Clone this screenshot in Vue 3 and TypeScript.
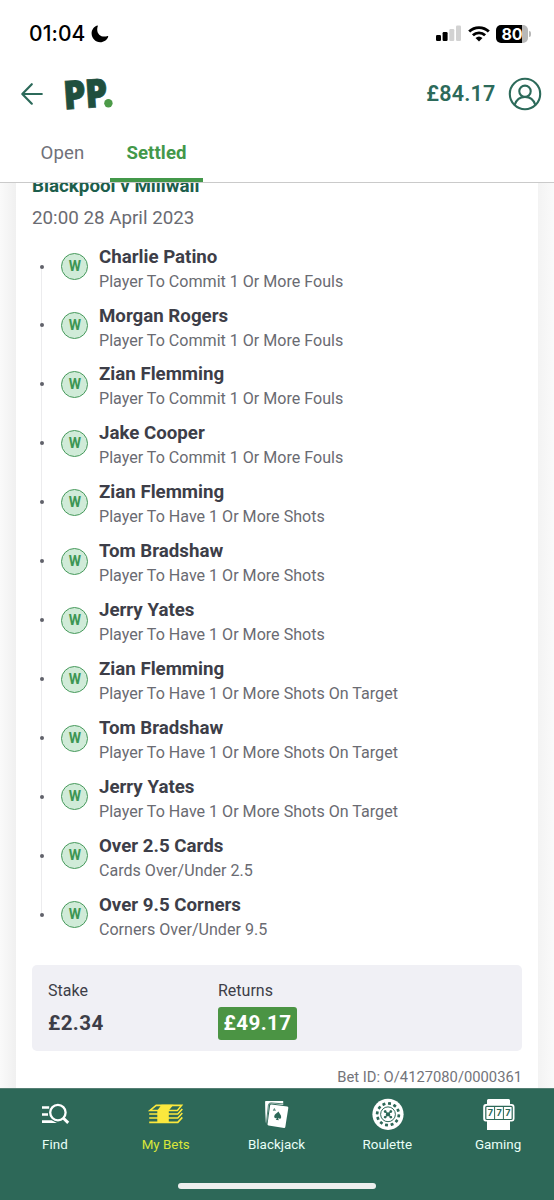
<script setup lang="ts">
interface Leg {
  name: string
  market: string
}

const fouls = 'Player To Commit 1 Or More Fouls'
const shots = 'Player To Have 1 Or More Shots'
const onTarget = 'Player To Have 1 Or More Shots On Target'

const legs: Leg[] = [
  { name: 'Charlie Patino', market: fouls },
  { name: 'Morgan Rogers', market: fouls },
  { name: 'Zian Flemming', market: fouls },
  { name: 'Jake Cooper', market: fouls },
  { name: 'Zian Flemming', market: shots },
  { name: 'Tom Bradshaw', market: shots },
  { name: 'Jerry Yates', market: shots },
  { name: 'Zian Flemming', market: onTarget },
  { name: 'Tom Bradshaw', market: onTarget },
  { name: 'Jerry Yates', market: onTarget },
  { name: 'Over 2.5 Cards', market: 'Cards Over/Under 2.5' },
  { name: 'Over 9.5 Corners', market: 'Corners Over/Under 9.5' },
]

const pockets = Array.from({ length: 12 }, (_, i) => i * 30 + 8)
</script>

<template>
  <div class="screen">
    <div class="status">
      <span class="clock">01:04</span>
      <svg class="moon" width="18" height="18" viewBox="0 0 18 18">
        <path d="M6.2 .6C2.9 1.8 .6 4.9 .6 8.6C.6 13.4 4.4 17.2 9.2 17.2C12.9 17.2 16 14.9 17.2 11.7C17.4 11.1 17 10.8 16.5 11C15.6 11.4 14.6 11.6 13.5 11.6C9.2 11.6 6.2 8.6 6.2 4.4C6.2 3.3 6.4 2.3 6.8 1.3C7 .8 6.7 .4 6.2 .6Z" fill="#000" />
      </svg>
      <svg class="signal" width="26" height="17" viewBox="0 0 26 17">
        <rect x="0" y="10" width="5" height="6" rx="1.2" />
        <rect x="6.6" y="7" width="5" height="9" rx="1.2" />
        <rect x="13.3" y="4" width="5" height="12" rx="1.2" fill="#d2d2d2" />
        <rect x="20" y="0.5" width="5" height="15.5" rx="1.2" fill="#d2d2d2" />
      </svg>
      <svg class="wifi" width="22" height="16" viewBox="0 0 22 16">
        <g fill="none" stroke="#000" stroke-width="2.9">
          <path d="M1.2 5.5A14.2 14.2 0 0 1 20.8 5.5" />
          <path d="M4.9 9.3A9 9 0 0 1 17.1 9.3" />
        </g>
        <path d="M7.5 12A5.2 5.2 0 0 1 14.5 12L11 15.6Z" />
      </svg>
      <div class="battery">
        <span class="level">80</span>
      </div>
      <span class="cap"></span>
    </div>

    <header class="bar">
      <svg class="back" width="22" height="22" viewBox="0 0 22 22">
        <path d="M10.8 1.2L1.3 11L10.8 20.7M1.6 11H20.8" fill="none" stroke="#2c6a5a" stroke-width="2.2" stroke-linecap="round" stroke-linejoin="round" />
      </svg>
      <svg class="logo" width="52" height="38" viewBox="0 0 52 38">
        <g class="logo-letters" transform="rotate(-4 22 18)">
          <text x="-1" y="34" textLength="22.5" lengthAdjust="spacingAndGlyphs">P</text>
          <text x="21" y="34" textLength="22.5" lengthAdjust="spacingAndGlyphs">P</text>
        </g>
        <circle cx="44.4" cy="29.3" r="4.2" fill="#4c9a48" />
      </svg>
      <span class="balance">£84.17</span>
      <svg class="avatar" width="34" height="34" viewBox="0 0 34 34" fill="none" stroke="#2c6a5a" stroke-width="2.1">
        <circle cx="17" cy="17" r="15.2" />
        <circle cx="17" cy="14.3" r="5.7" />
        <path d="M6.6 28C8.3 22.9 12.1 19.9 17 19.9S25.7 22.9 27.4 28" />
      </svg>
    </header>

    <nav class="tabs">
      <span class="tab">Open</span>
      <span class="tab active">Settled</span>
    </nav>

    <main class="content">
      <section class="card">
        <h2 class="match">Blackpool v Millwall</h2>
        <p class="date">20:00 28 April 2023</p>
        <ul class="legs">
          <li v-for="(leg, i) in legs" :key="i" class="leg">
            <span class="rail"><i class="dot"></i></span>
            <span class="result">W</span>
            <div class="detail">
              <b class="name">{{ leg.name }}</b>
              <span class="market">{{ leg.market }}</span>
            </div>
          </li>
        </ul>
        <div class="summary">
          <div class="stake">
            <span class="label">Stake</span>
            <b class="amount">£2.34</b>
          </div>
          <div class="returns">
            <span class="label">Returns</span>
            <b class="amount paid">£49.17</b>
          </div>
        </div>
        <p class="bet-id">Bet ID: O/4127080/0000361</p>
      </section>
    </main>

    <footer class="bottom">
      <div class="items">
        <div class="item">
          <svg width="36" height="32" viewBox="0 0 36 32">
            <g fill="none" stroke="#fff">
              <path d="M5 7.6H12.2M5 14.4H11" stroke-width="2.5" />
              <path d="M5 20.2H14.6L20 23H5Z" fill="#fff" stroke="none" />
              <circle cx="20.9" cy="12.6" r="7.7" stroke-width="2.3" />
              <path d="M26.2 18L31.2 22.8" stroke-width="3" />
            </g>
          </svg>
          <span>Find</span>
        </div>
        <div class="item current">
          <svg width="36" height="32" viewBox="0 0 36 32">
            <g fill="none" stroke="#fbe83d" stroke-width="1.6">
              <path d="M8.2 5.4H33.6L29.4 10.5H2Z" />
              <path d="M1.2 14H29.8L34.3 9M1.2 18H29.8L34.3 13M1.2 22.4H29.8L34.3 17.4" />
            </g>
            <path d="M13.5 4.7H25.5L20.8 10.4V23H9.3V10.4Z" fill="#fbe83d" />
          </svg>
          <span>My Bets</span>
        </div>
        <div class="item">
          <svg width="36" height="32" viewBox="0 0 36 32">
            <path d="M6.8 1H24.2V5L12 3.6Q10.3 3.5 10 5L7.8 23.5L6.8 22.5Q6.1 12 6.1 2Q6 1.2 6.8 1Z" fill="#fff" />
            <path d="M12.3 4.5L28.3 6.6Q29.4 6.8 29.3 7.9L26.3 27Q26.1 28 25.1 27.9L9.5 25.5Q8.4 25.3 8.5 24.2L11.1 5.4Q11.3 4.4 12.3 4.5Z" fill="#fff" />
            <g transform="translate(18.8 16) rotate(8)" fill="#2d6858">
              <path d="M0-4.5C1.4-2.4 3.5-1.4 3.5.7C3.5 2.5 1.6 2.9.6 1.8L1.5 4H-1.5L-.6 1.8C-1.6 2.9-3.5 2.5-3.5.7C-3.5-1.4-1.4-2.4 0-4.5Z" />
            </g>
            <path d="M15.3 8.5L14.3 10.8M15.5 8.5L16.3 11M14.7 10H16" stroke="#2d6858" stroke-width=".7" />
            <path d="M24.5 3.9L12 2.9Q9.7 2.8 9.4 5L7.4 23.6" fill="none" stroke="#2d6858" stroke-width=".8" />
          </svg>
          <span>Blackjack</span>
        </div>
        <div class="item">
          <svg width="36" height="32" viewBox="0 0 36 32">
            <circle cx="18" cy="14.3" r="15.6" fill="#fff" />
            <g fill="#2d6858">
              <rect v-for="a in pockets" :key="a" x="16.5" y="2.1" width="3" height="2.7" rx=".4" :transform="`rotate(${a} 18 14.3)`" />
              <circle v-for="a in [45, 135, 225, 315]" :key="a" cx="18" cy="10.3" r="1.4" :transform="`rotate(${a} 18 14.3)`" />
              <circle cx="18" cy="14.3" r="2.1" />
            </g>
            <circle cx="18" cy="14.3" r="7.4" fill="none" stroke="#2d6858" stroke-width="1" />
            <path d="M15 11.3L21 17.3M21 11.3L15 17.3" stroke="#2d6858" stroke-width="1.2" />
          </svg>
          <span>Roulette</span>
        </div>
        <div class="item">
          <svg width="36" height="32" viewBox="0 0 36 32">
            <path d="M7.4-1H27.6Q29-1 29 .5V4H30.7Q33.5 4 33.5 7V18.5Q33.5 21.5 30.7 21.5H29V30H6V21.5H4.7Q2.2 21.5 2.2 18.5V7Q2.2 4 4.7 4H6V.5Q6-1 7.4-1Z" fill="#fff" />
            <rect x="4.8" y="6.3" width="26.4" height="13.2" rx="1" fill="none" stroke="#2d6858" stroke-width="1.2" />
            <path d="M13.6 6.5V19.3M22.4 6.5V19.3" stroke="#2d6858" />
            <g class="reels">
              <text x="9.3" y="16.3">7</text>
              <text x="18" y="16.3">7</text>
              <text x="26.8" y="16.3">7</text>
            </g>
          </svg>
          <span>Gaming</span>
        </div>
      </div>
      <div class="home"></div>
    </footer>
  </div>
</template>

<style>
body {
  margin: 0;
}
</style>

<style scoped>
.screen {
  width: 554px;
  height: 1200px;
  display: flex;
  flex-direction: column;
  overflow: hidden;
  background: #fff;
  font-family: Roboto, "Liberation Sans", sans-serif;
  color: #3d3e48;
}
svg {
  display: block;
  flex: none;
  overflow: visible;
}
.status {
  height: 66px;
  box-sizing: border-box;
  padding: 1px 23px 0 29px;
  display: flex;
  align-items: center;
}
.clock {
  font: 500 21px/24px Inter, sans-serif;
  letter-spacing: 0.1px;
  color: #000;
}
.moon {
  margin-left: 6px;
}
.signal {
  margin-left: auto;
}
.wifi {
  margin-left: 6px;
}
.battery {
  width: 32px;
  height: 18px;
  margin-left: 6px;
  border-radius: 5px;
  background: linear-gradient(90deg, #000 80%, #b8b8b8 80%);
}
.level {
  display: block;
  text-align: center;
  font: 700 16px/18px Inter, sans-serif;
  letter-spacing: -0.2px;
  color: #fff;
}
.cap {
  width: 2px;
  height: 6px;
  margin-left: 1px;
  border-radius: 0 3px 3px 0;
  background: #b8b8b8;
}
.bar {
  height: 56px;
  display: flex;
  align-items: center;
  padding: 0 12.5px 0 21px;
}
.logo {
  margin: -2px 0 0 21px;
}
.logo-letters {
  font: 900 39.5px "Noto Sans", sans-serif;
  fill: #1f4f3e;
  stroke: #1f4f3e;
  stroke-width: 0.8;
}
.balance {
  margin-left: auto;
  font-size: 21.5px;
  font-weight: 600;
  line-height: 24px;
  letter-spacing: 0.2px;
  color: #2c6a5a;
}
.avatar {
  margin-left: 12px;
}
.tabs {
  height: 60px;
  display: flex;
  align-items: stretch;
  border-bottom: 1px solid #cacaca;
  padding-left: 15px;
  font-size: 18.6px;
  line-height: 63px;
  letter-spacing: 0.1px;
}
.tab {
  width: 95px;
  height: 60px;
  text-align: center;
  color: #70717a;
}
.active {
  width: 93px;
  color: #43984a;
  font-weight: 700;
  box-shadow: inset 0 -4px #43984a;
}
.content {
  height: 905px;
  overflow: hidden;
  padding: 0 16px;
  background: linear-gradient(90deg, #fafafa 0, #f0f0f0 16px, #f3f3f3 538px, #fafafa 554px);
}
.card {
  height: 905px;
  box-sizing: border-box;
  padding: 0 16px;
  background: #fff;
}
.match {
  margin: 0;
  height: 22px;
  line-height: 6px;
  font-size: 18.8px;
  font-weight: 700;
  color: #1d5e4c;
}
.date {
  margin: 0;
  font-size: 18.8px;
  line-height: 26px;
  color: #6a6b72;
}
.legs {
  margin: 6px 0 0;
  padding: 0;
  list-style: none;
}
.leg {
  height: 58.94px;
  display: flex;
}
.rail {
  width: 20px;
  flex: none;
  background: linear-gradient(#ececee, #ececee) 9px 0 / 1px 100% no-repeat;
}
.leg:first-child .rail {
  background-position: 9px 30px;
}
.leg:last-child .rail {
  background-size: 1px 30px;
}
.dot {
  display: block;
  width: 4px;
  height: 4px;
  margin: 27.5px 0 0 8px;
  border-radius: 50%;
  background: #60616a;
}
.result {
  width: 27px;
  height: 27px;
  box-sizing: border-box;
  margin: 16px 0 0 9.4px;
  border: 1.5px solid #46995b;
  border-radius: 50%;
  background: #d0ebd8;
  color: #3d9654;
  font-size: 14px;
  font-weight: 700;
  line-height: 25.4px;
  text-align: center;
}
.detail {
  margin-left: 10.6px;
  padding-top: 7.6px;
  white-space: nowrap;
}
.name {
  display: block;
  font-size: 18.7px;
  line-height: 24px;
}
.market {
  display: block;
  font-size: 16.08px;
  line-height: 26px;
  color: #6a6b72;
}
.summary {
  height: 86px;
  margin-top: 20.7px;
  display: flex;
  border-radius: 5px;
  background: #f0f0f5;
}
.stake {
  width: 154px;
  padding-left: 16px;
}
.returns {
  padding-left: 16px;
}
.label {
  display: block;
  margin-top: 15.5px;
  font-size: 16px;
  line-height: 21px;
}
.amount {
  display: block;
  margin-top: 5.5px;
  font-size: 20.6px;
  line-height: 33px;
  letter-spacing: 0.4px;
}
.paid {
  width: 79px;
  text-align: center;
  border-radius: 3px;
  background: #4b9444;
  color: #fff;
}
.bet-id {
  margin: 15px 0 0;
  font-size: 14.75px;
  line-height: 22px;
  text-align: right;
  color: #73747a;
}
.bottom {
  height: 112px;
  box-sizing: border-box;
  border-top: 1px solid #557f74;
  background: #2d6858;
}
.items {
  display: flex;
  justify-content: space-between;
  height: 94px;
}
.item {
  width: 110.8px;
  padding-top: 11px;
  display: flex;
  flex-direction: column;
  align-items: center;
  color: #e9fff7;
  font-size: 13.4px;
}
.item span {
  margin: 5px 1px 0 0;
  line-height: 16px;
}
.current {
  color: #d9e63a;
}
.reels {
  font: 700 9px Inter, sans-serif;
  fill: #2d6858;
  text-anchor: middle;
}
.home {
  width: 198px;
  height: 6px;
  margin: 0 auto;
  border-radius: 3px;
  background: #eee;
}
</style>
